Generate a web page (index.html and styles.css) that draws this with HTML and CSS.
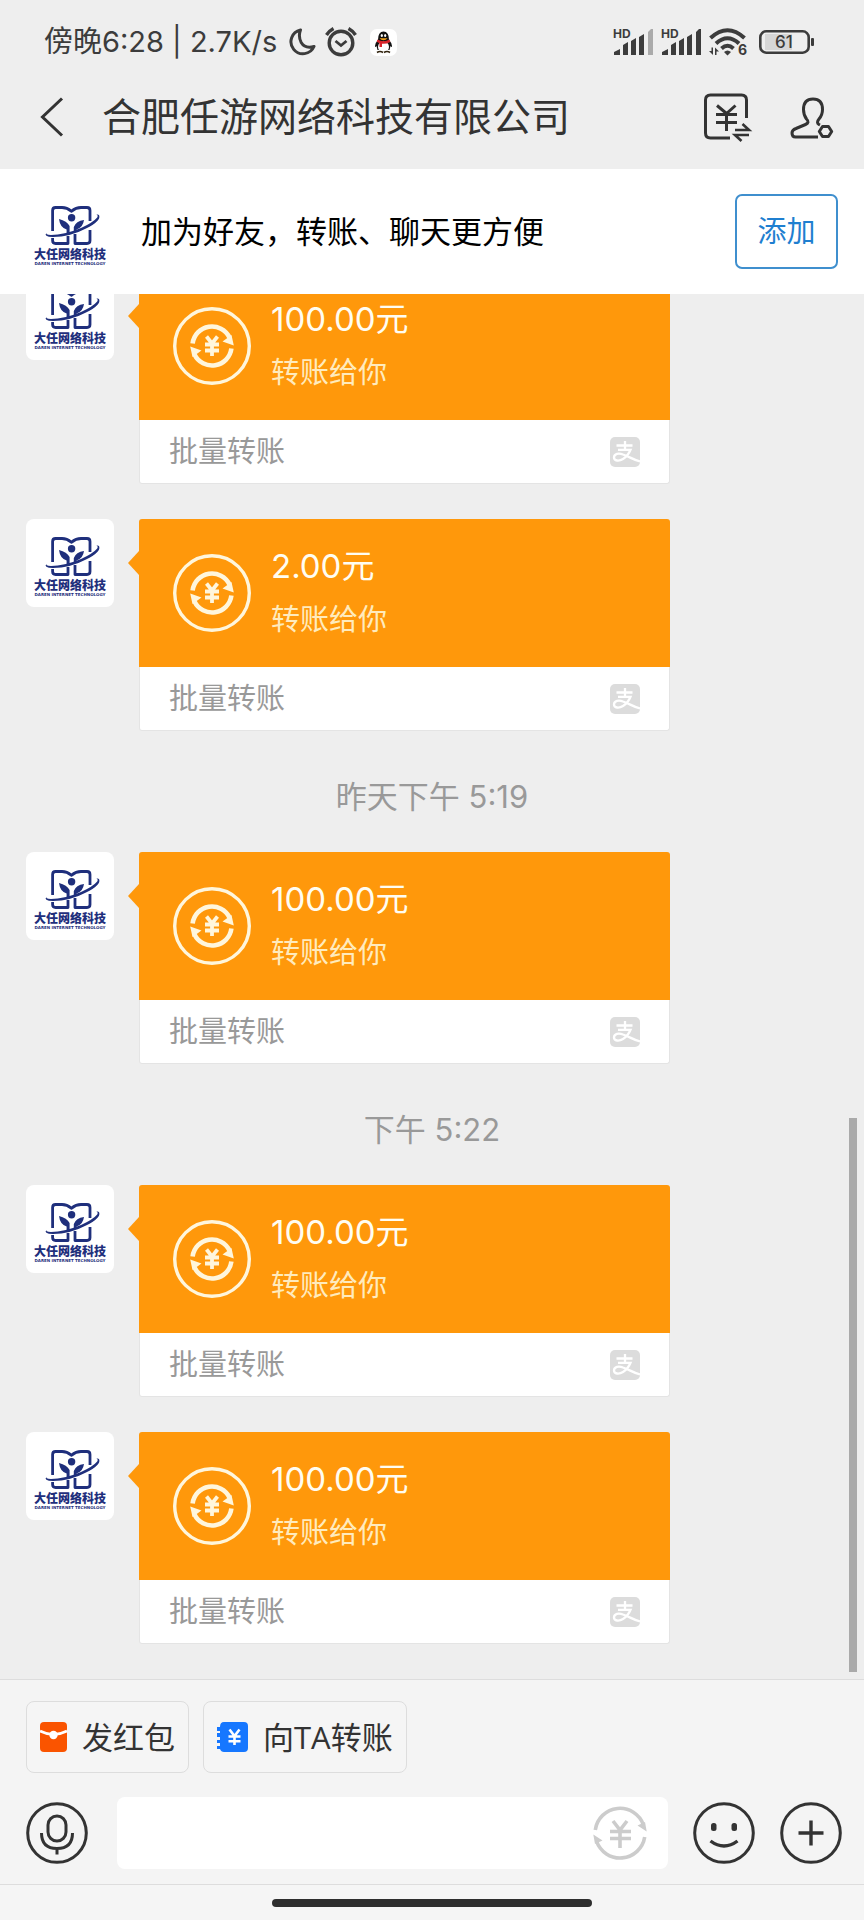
FILE: index.html
```html
<!DOCTYPE html>
<html lang="zh-CN">
<head>
<meta charset="utf-8">
<meta name="viewport" content="width=device-width, initial-scale=1">
<title>合肥任游网络科技有限公司</title>
<link rel="stylesheet" href="styles.css">
</head>
<body>
<svg class="sprite" aria-hidden="true">
  <symbol id="logo" viewBox="0 0 88 88">
    <g fill="none" stroke="#1f2f7c" stroke-width="2.800" stroke-linejoin="round">
      <path d="M26.600 43V22.500q0-3 3-3H36q5 0 9.300 3.800Q50 19.500 55 19.500h6q3 0 3 3V33"/>
      <path d="M26.600 50v2.500q0 3 3 3H42V48M64 42v10.500q0 3-3 3H49V46"/>
    </g>
    <g fill="#1f2f7c">
      <circle cx="45.600" cy="29.800" r="3.700"/>
      <path d="M33 31Q41 33 43.600 38v7.500l-3 .8V41.500Q34 39.500 33 31zM58 32Q50 33 47.800 39v5.500l2.800-1V41.500Q57 39.500 58 32z"/>
      <path d="M20.500 44.500q-3.500 4.300 6.500 4.500Q44 49 60 40.500 75 33 73.200 27.500q-.8-1.500-3-.8 2.300.3 1 2.800Q67 34.500 55 40 38 47 25 47q-6-.2-4.500-2.500z"/>
    </g>
    <text class="logo-name" x="44" y="71" text-anchor="middle">大任网络科技</text>
    <text class="logo-sub" x="44" y="77" text-anchor="middle">DAREN INTERNET TECHNOLOGY</text>
  </symbol>
  <symbol id="transfer" viewBox="0 0 78 78">
    <circle cx="39" cy="39" r="37.300" fill="none" stroke="#fff6dc" stroke-width="3.400"/>
    <path d="M19.600 36.500A19.500 19.500 0 0 1 56.500 30.500M58.400 41.500A19.500 19.500 0 0 1 21.500 47.500" fill="none" stroke="#fff6dc" stroke-width="4.600"/>
    <path d="M58.500 28l2.300 10.500L49.500 34.500zM19.500 50l-2.300-10.500L28.500 43.500z" fill="#fff6dc"/>
    <path d="M33.500 29.500l5.500 7 5.500-7M39 36v13M32 37.500h14M32 43.500h14" fill="none" stroke="#fff6dc" stroke-width="3.800"/>
  </symbol>
  <symbol id="alipay" viewBox="0 0 30 30">
    <rect width="30" height="30" rx="5" fill="#dcdcdc"/>
    <path d="M15 4v8M6.500 8.500h16M8 12.800h12.500Q18 19 13 22c-4 2.500-9 2-9-1.500 0-4 5-4.500 9-3 6 2 10 5 17 7" fill="none" stroke="#fff" stroke-width="2.300"/>
  </symbol>
</svg>

<div class="page">
  <div class="status">
    <div class="status-side">
      <span class="status-text">傍晚6:28 | 2.7K/s</span>
      <svg class="i-moon" viewBox="0 0 28 28"><path d="M12.500 2A12 12 0 1 0 26 18.500Q17 21 13.200 14.500 10 8.500 12.500 2z" fill="none" stroke="#3c3c3c" stroke-width="3" stroke-linejoin="round"/></svg>
      <svg class="i-alarm" viewBox="0 0 32 30" fill="none" stroke="#3c3c3c" stroke-width="3.400"><circle cx="16" cy="16" r="11.800"/><path d="M10.500 14l5.500 4.500 5.500-4.500" stroke-width="2.800"/><path d="M1.500 8Q4 4 8.500 1.500M30.500 8Q28 4 23.500 1.500"/></svg>
      <svg class="i-qq" viewBox="0 0 27 27"><rect width="27" height="27" rx="7" fill="#fff"/><path d="M5 17q0-3 3-6 0-8.500 5.500-8.500T19 11q3 3 3 6 0 2-1.500 0l-1 4h-12l-1-4Q5 19 5 17z" fill="#111"/><ellipse cx="13.500" cy="18" rx="5.500" ry="5.500" fill="#fff"/><path d="M7.500 10.500q6 3.500 12 0l.8 2.500q-4 2.200-8.300 1.800V18H9.500v-3.800l-2.800-1.400z" fill="#d8232a"/><ellipse cx="11.800" cy="6.500" rx="1.100" ry="1.600" fill="#fff"/><ellipse cx="15.200" cy="6.500" rx="1.100" ry="1.600" fill="#fff"/><path d="M9.500 9.200h8q-1.500 2-4 2t-4-2z" fill="#f3a21b"/><path d="M7 23.500q3-2 6 0M14 23.500q3-2 6 0" stroke="#32240f" stroke-width="1.600" fill="none"/></svg>
    </div>
    <div class="status-side status-right">
      <svg class="i-signal" viewBox="0 0 40 26"><text class="hd" x="0" y="9">HD</text><path d="M1 26v-3l6-3v6zM10 26V16l5-3v13zM18 26V12l5-3v17zM26 26V8l5-3v21z" fill="#3c3c3c"/><path d="M35 26V3l3-3h2v26z" fill="#aaa"/></svg>
      <svg class="i-signal" viewBox="0 0 40 26"><text class="hd" x="0" y="9">HD</text><path d="M1 26v-3l6-3v6zM10 26V16l5-3v13zM18 26V12l5-3v17zM26 26V8l5-3v21zM35 26V3l3-3h2v26z" fill="#3c3c3c"/></svg>
      <svg class="i-wifi" viewBox="0 0 38 28"><g fill="none" stroke="#3c3c3c" stroke-width="4"><path d="M1.500 10Q18.500-5.500 35.500 10M7 15.500Q18.500 5 30 15.500M12.500 20.500q6-5.500 12 0"/></g><path d="M15 24q3.500-3 7 0l-3.500 3.500zM0 23h2.500v-3.500H4V27zM6 27v-7.500l4 4H7.500V27z" fill="#3c3c3c"/><text class="wifi-gen" x="29" y="27">6</text></svg>
      <svg class="i-battery" viewBox="0 0 56 26"><rect x="6" y="5" width="27" height="16" fill="#d6d6d6"/><rect x="1.300" y="2.300" width="48.400" height="21.400" rx="6" fill="none" stroke="#3c3c3c" stroke-width="2.600"/><rect x="52" y="9" width="3" height="8" rx="1" fill="#3c3c3c"/><text class="battery-level" x="25" y="19" text-anchor="middle">61</text></svg>
    </div>
  </div>

  <header class="header">
    <button class="icon-btn" type="button" aria-label="返回"><svg class="i-back" viewBox="0 0 24 40"><path d="M22 1.500L2.500 20 22 38.500" fill="none" stroke="#333" stroke-width="3"/></svg></button>
    <h1 class="title">合肥任游网络科技有限公司</h1>
    <button class="icon-btn" type="button" aria-label="转账记录"><svg class="i-head" viewBox="0 0 48 48" fill="none" stroke="#333" stroke-width="3"><path d="M43.500 25V7q0-5-5-5h-31q-5 0-5 5v33q0 5 5 5H27"/><path d="M14 12.500l9.500 8 9-8M23.500 20v18M13 21.500h21M13 29.500h21"/><path d="M32 37h14L39.500 31M46 42H32l6.500 6" stroke-width="2.600"/></svg></button>
    <button class="icon-btn" type="button" aria-label="好友设置"><svg class="i-head" viewBox="0 0 48 48" fill="none" stroke="#333" stroke-width="3" stroke-linejoin="round"><path d="M31 44H8.500q-3.500 0-3.500-4 0-3 4-4.500l9.500-4q4.500-2 1-5.500-3-4-3-9.500Q16.500 6 26 6t9.500 10.500q0 5.500-3.500 9.500-3 3.500 0 5.500l1 .5"/><path d="M35.500 33.500h6l3.200 5-3.200 5h-6l-3.200-5z"/></svg></button>
  </header>

  <section class="banner">
    <svg class="avatar" role="img" aria-label="头像"><use href="#logo"/></svg>
    <p class="banner-text">加为好友，转账、聊天更方便</p>
    <button class="add-btn" type="button">添加</button>
  </section>

  <main class="chat">
    <article class="message">
      <svg class="avatar" role="img" aria-label="头像"><use href="#logo"/></svg>
      <div class="card">
        <div class="card-main"><svg class="i-transfer"><use href="#transfer"/></svg><div><p class="amount">100.00元</p><p class="note">转账给你</p></div></div>
        <div class="card-foot"><span>批量转账</span><svg class="i-alipay"><use href="#alipay"/></svg></div>
      </div>
    </article>
    <article class="message">
      <svg class="avatar" role="img" aria-label="头像"><use href="#logo"/></svg>
      <div class="card">
        <div class="card-main"><svg class="i-transfer"><use href="#transfer"/></svg><div><p class="amount">2.00元</p><p class="note">转账给你</p></div></div>
        <div class="card-foot"><span>批量转账</span><svg class="i-alipay"><use href="#alipay"/></svg></div>
      </div>
    </article>
    <time class="stamp">昨天下午 5:19</time>
    <article class="message">
      <svg class="avatar" role="img" aria-label="头像"><use href="#logo"/></svg>
      <div class="card">
        <div class="card-main"><svg class="i-transfer"><use href="#transfer"/></svg><div><p class="amount">100.00元</p><p class="note">转账给你</p></div></div>
        <div class="card-foot"><span>批量转账</span><svg class="i-alipay"><use href="#alipay"/></svg></div>
      </div>
    </article>
    <time class="stamp">下午 5:22</time>
    <article class="message">
      <svg class="avatar" role="img" aria-label="头像"><use href="#logo"/></svg>
      <div class="card">
        <div class="card-main"><svg class="i-transfer"><use href="#transfer"/></svg><div><p class="amount">100.00元</p><p class="note">转账给你</p></div></div>
        <div class="card-foot"><span>批量转账</span><svg class="i-alipay"><use href="#alipay"/></svg></div>
      </div>
    </article>
    <article class="message">
      <svg class="avatar" role="img" aria-label="头像"><use href="#logo"/></svg>
      <div class="card">
        <div class="card-main"><svg class="i-transfer"><use href="#transfer"/></svg><div><p class="amount">100.00元</p><p class="note">转账给你</p></div></div>
        <div class="card-foot"><span>批量转账</span><svg class="i-alipay"><use href="#alipay"/></svg></div>
      </div>
    </article>
    <div class="scroll-thumb"></div>
  </main>

  <footer class="composer">
    <div class="chips">
      <button class="chip" type="button"><svg class="i-packet" viewBox="0 0 27 30"><rect width="27" height="30" rx="4" fill="#fa5400"/><path d="M0 9q13.500 7 27 0" fill="none" stroke="#fff" stroke-width="2.600"/><circle cx="13.500" cy="13" r="4.200" fill="#fff"/></svg>发红包</button>
      <button class="chip" type="button"><svg class="i-pay" viewBox="0 0 31 30"><path d="M7 0h20q4 0 4 4v22q0 4-4 4H7q-3 0-4-3H0v-3h3v-3H0v-3h3v-3H0v-4h3V9H0V5h3q0-5 4-5z" fill="#1677ff"/><path d="M12.500 7.500L17.500 14l5-6.500M17.500 13v10M11.500 14.500h12M11.500 19.300h12" fill="none" stroke="#fff" stroke-width="2.600"/></svg>向TA转账</button>
    </div>
    <div class="input-row">
      <button class="icon-btn" type="button" aria-label="语音"><svg class="i-round" viewBox="0 0 62 62" fill="none" stroke="#333" stroke-width="3"><circle cx="31" cy="31" r="29.300"/><rect x="22" y="14" width="18" height="25" rx="9"/><path d="M15.500 31q0 15.500 15.500 15.500T46.500 31M31 46v6.500"/></svg></button>
      <div class="field">
        <input class="field-input" type="text" aria-label="输入消息">
        <button class="icon-btn" type="button" aria-label="转账"><svg class="i-field" viewBox="0 0 54 54" fill="none" stroke="#ccc" stroke-width="3.600"><path d="M2.300 24A24.900 24.900 0 0 1 50.500 19M51.700 31A24.900 24.900 0 0 1 3.500 35"/><path d="M52 16l1.700 9.500-9.200-6zM2 38L.3 28.500l9.200 6z" fill="#ccc" stroke="none"/><path d="M20 15l7 9 7-9M27 23v19M17 25.500h21M17 32.500h21"/></svg></button>
      </div>
      <button class="icon-btn" type="button" aria-label="表情"><svg class="i-round" viewBox="0 0 62 62" fill="none" stroke="#333" stroke-width="3"><circle cx="31" cy="31" r="29.300"/><path d="M17.500 39q13.500 10 27 0" stroke-width="3.400"/><g fill="#333" stroke="none"><rect x="18" y="21" width="5.500" height="8" rx="2.500"/><rect x="38.500" y="21" width="5.500" height="8" rx="2.500"/></g></svg></button>
      <button class="icon-btn" type="button" aria-label="更多"><svg class="i-round" viewBox="0 0 62 62" fill="none" stroke="#333" stroke-width="3"><circle cx="31" cy="31" r="29.300"/><path d="M31 18.500v25M18.500 31h25" stroke-width="3.400"/></svg></button>
    </div>
    <div class="home"><div class="home-bar"></div></div>
  </footer>
</div>
</body>
</html>
```
FILE: styles.css
```css
* { box-sizing: border-box; }
body, h1, p { margin: 0; }
body {
  background: #eee;
  color: #333;
  font-family: Inter, "Noto Sans CJK SC", sans-serif;
}
button, input { font: inherit; color: inherit; }
svg { display: block; flex: none; }
.sprite { position: absolute; width: 0; height: 0; }
.page { display: flex; flex-direction: column; height: 100vh; }

.status {
  display: flex;
  justify-content: space-between;
  align-items: center;
  height: 72px;
  padding: 12px 49px 0 44px;
}
.status-side { display: flex; align-items: center; gap: 9px; }
.status-right { gap: 8px; }
.status-text { font-size: 29px; line-height: 40px; color: #3c3c3c; white-space: nowrap; }
.i-moon { width: 28px; height: 28px; margin-left: 2px; }
.i-alarm { width: 32px; height: 30px; }
.i-qq { width: 27px; height: 27px; margin-left: 4px; }
.i-signal { width: 40px; height: 26px; overflow: visible; }
.i-wifi { width: 38px; height: 28px; overflow: visible; }
.i-battery { width: 56px; height: 26px; margin-left: 4px; }
.hd { font: 700 12px Inter, sans-serif; fill: #3c3c3c; }
.wifi-gen { font: 700 14px Inter, sans-serif; fill: #3c3c3c; }
.battery-level { font: 500 17px Inter, sans-serif; fill: #3c3c3c; }

.header {
  display: flex;
  align-items: center;
  height: 97px;
  padding: 0 29px 7px 40px;
}
.icon-btn { display: block; flex: none; padding: 0; border: 0; background: none; }
.i-back { width: 24px; height: 40px; }
.title { flex: 1; margin-left: 38px; font-size: 39px; font-weight: 400; line-height: 48px; }
.i-head { width: 48px; height: 48px; overflow: visible; }
.header .icon-btn + .icon-btn { margin-left: 36px; }

.banner {
  display: flex;
  align-items: center;
  height: 125px;
  padding: 0 26px;
  background: #fff;
  color: #000;
}
.avatar { width: 88px; height: 88px; border-radius: 8px; background: #fff; }
.logo-name { font: 900 12px "Noto Sans CJK SC", sans-serif; fill: #1f2f7c; }
.logo-sub { font: 700 4px "DejaVu Sans", sans-serif; fill: #1f2f7c; }
.banner-text { flex: 1; margin-left: 27px; font-size: 31px; line-height: 40px; }
.add-btn {
  width: 103px;
  height: 75px;
  padding: 0;
  border: 2px solid #3f8fce;
  border-radius: 7px;
  background: #fff;
  color: #1f7fd0;
  font-size: 29px;
  line-height: 40px;
}

.chat {
  position: relative;
  display: flex;
  flex: 1;
  flex-direction: column;
  justify-content: flex-end;
  min-height: 0;
  overflow: hidden;
}
.message { display: flex; flex: none; gap: 25px; margin: 0 26px 35px; }
.card { position: relative; width: 531px; }
.card::before {
  content: "";
  position: absolute;
  top: 32px;
  left: -11px;
  border: solid transparent;
  border-width: 12px 11px 12px 0;
  border-right-color: #ff980b;
}
.card-main {
  display: flex;
  align-items: center;
  gap: 20px;
  height: 148px;
  padding-left: 34px;
  border-radius: 3px 3px 0 0;
  background: #ff980b;
  color: #fff6dc;
}
.i-transfer { width: 78px; height: 78px; }
.amount { font-size: 33px; line-height: 53px; color: #fffdf2; }
.note { font-size: 29px; line-height: 53px; color: #ffebbd; }
.card-foot {
  display: flex;
  align-items: center;
  justify-content: space-between;
  height: 64px;
  padding: 0 29px;
  border: solid #e4e4e4;
  border-width: 0 1px 1px;
  border-radius: 0 0 3px 3px;
  background: #fff;
  color: #999;
  font-size: 29px;
  line-height: 40px;
}
.i-alipay { width: 30px; height: 30px; }
.stamp {
  flex: none;
  padding-top: 6px;
  margin-bottom: 30px;
  color: #999;
  font-size: 31px;
  line-height: 50px;
  text-align: center;
}
.scroll-thumb {
  position: absolute;
  right: 7px;
  bottom: 7px;
  width: 8px;
  height: 40%;
  background: #aaa;
}

.composer { border-top: 1px solid #ddd; background: #f4f4f4; }
.chips { display: flex; gap: 14px; padding: 21px 26px 0; }
.chip {
  display: flex;
  align-items: center;
  gap: 15px;
  height: 72px;
  padding: 0 13px;
  border: 1px solid #ddd;
  border-radius: 8px;
  background: #f5f5f5;
  font-family: "Open Sans", "Noto Sans CJK SC", sans-serif;
  font-size: 31px;
  line-height: 40px;
}
.i-packet { width: 27px; height: 30px; }
.i-pay { width: 31px; height: 30px; }
.input-row { display: flex; align-items: center; gap: 25px; padding: 24px 22px 15px 26px; }
.i-round { width: 62px; height: 62px; }
.field {
  display: flex;
  flex: 1;
  align-items: center;
  min-width: 0;
  height: 72px;
  margin-left: 4px;
  padding: 0 21px;
  border-radius: 8px;
  background: #fff;
}
.field-input { flex: 1; min-width: 0; height: 100%; padding: 0; border: 0; outline: 0; background: none; font-size: 31px; }
.i-field { width: 54px; height: 54px; }
.home { display: flex; align-items: center; justify-content: center; height: 36px; border-top: 1px solid #ddd; background: #f5f5f5; }
.home-bar { width: 37%; height: 8px; border-radius: 4px; background: #2e2e2e; }
```
